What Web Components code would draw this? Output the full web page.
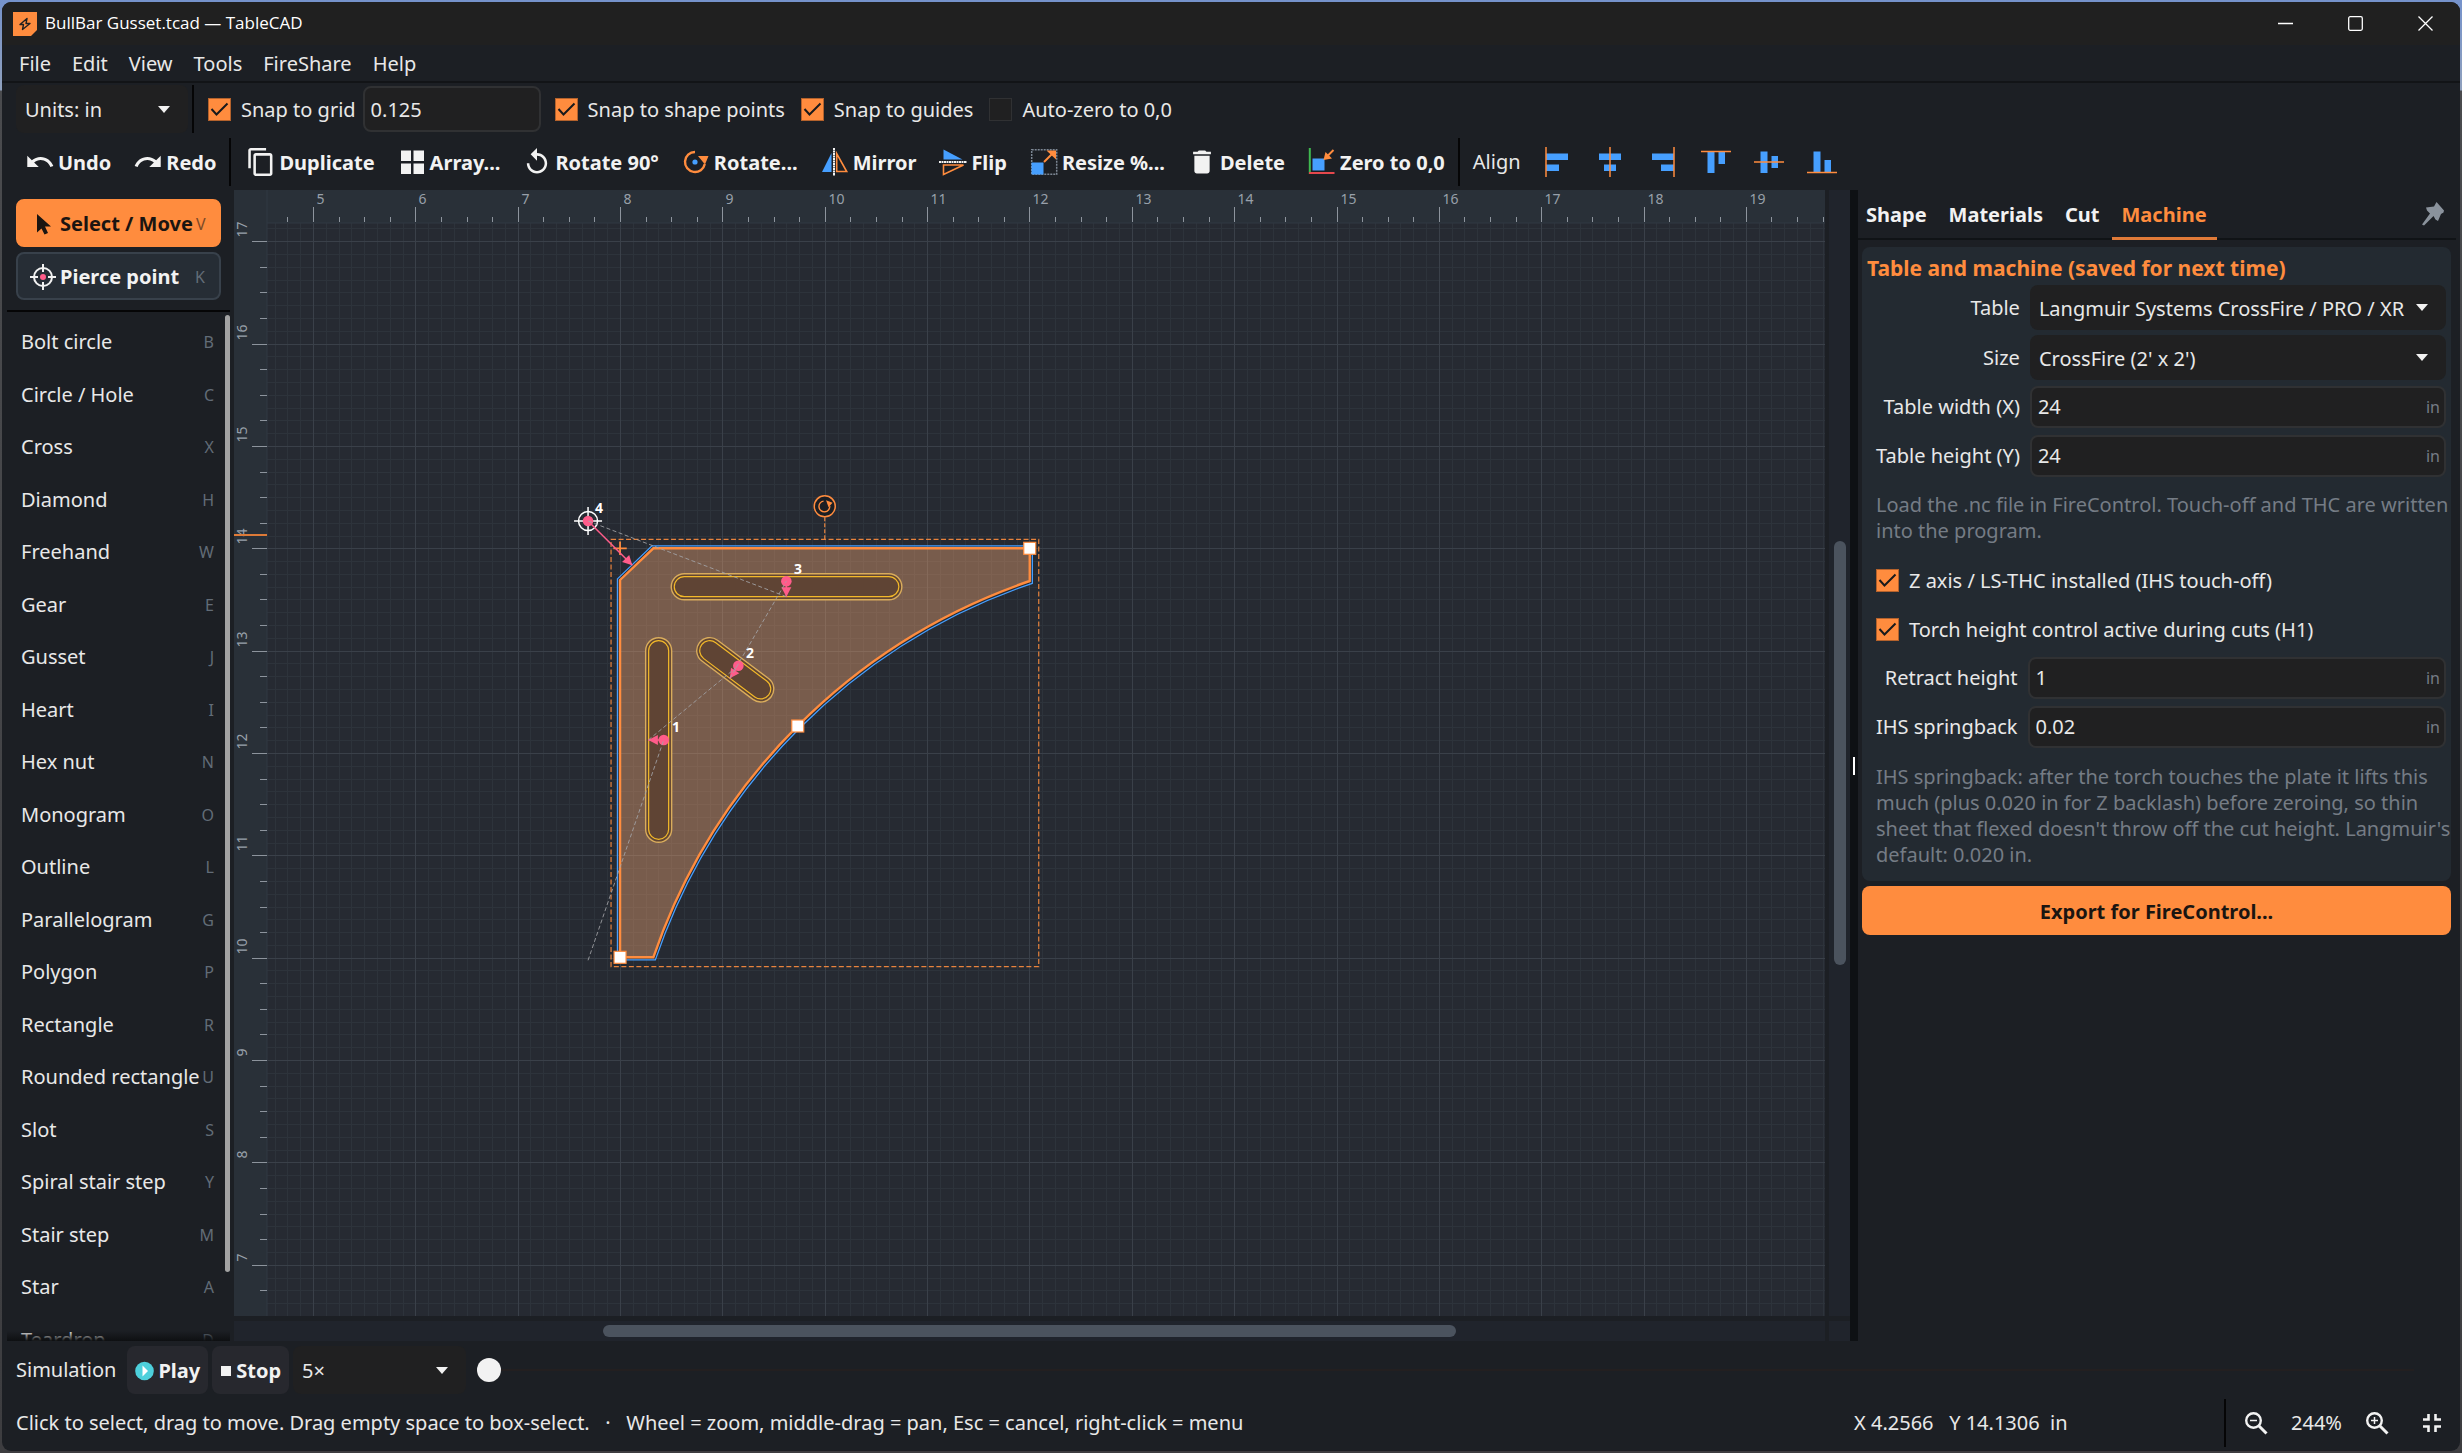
<!DOCTYPE html>
<html lang="en">
<head>
<meta charset="utf-8">
<title>BullBar Gusset.tcad — TableCAD</title>
<style>
  html, body { height: 100%; }
  body {
    margin: 0; padding: 2px; box-sizing: border-box; overflow: hidden;
    background: linear-gradient(#7592cb 0, #8fa0bd 90px, #4a4b4e 91px, #3d3d40 100%);
    font: 20px/26px "Noto Sans", "Open Sans", sans-serif;
    color: #e8e8e8;
    --bg: #1c1f24; --dark: #202021; --line: #303133; --accent: #ff8c3e;
    --dim: #757c85; --key: #626c77; --black: #050506;
  }
</style>
</head>
<body>
<cad-app></cad-app>

<script>
const base = `*{box-sizing:border-box}
button,input,select{font:inherit;color:inherit;margin:0;border:0;background:none;padding:0;outline:0}
svg{display:block;flex:none}`;

const define = (name, html, setup) => customElements.define(name, class extends HTMLElement {
  constructor() {
    super();
    this.attachShadow({ mode: 'open' });
    this.shadowRoot.innerHTML = `<style>${base}</style>` + (typeof html === 'function' ? html(this) : html);
  }
  connectedCallback() { if (setup) setup(this, this.shadowRoot); }
});

const material = d => `<svg width="28" height="28" viewBox="1 1 22 22" overflow="visible" fill="currentColor"><path d="${d}"/></svg>`;
const art = (inner, w = 28) => `<svg width="${w}" height="28" viewBox="0 0 ${w} 28" overflow="visible" fill="none">${inner}</svg>`;
const B = '#469fff', O = '#ff8c3e';
const icons = {
  undo: material('M12.5 8c-2.65 0-5.05.99-6.9 2.6L2 7v9h9l-3.62-3.62c1.39-1.16 3.16-1.88 5.12-1.88 3.54 0 6.55 2.31 7.6 5.5l2.37-.78C21.08 11.03 17.15 8 12.5 8z'),
  redo: material('M18.4 10.6C16.55 8.99 14.15 8 11.5 8c-4.65 0-8.58 3.03-9.96 7.22L3.9 16c1.05-3.19 4.05-5.5 7.6-5.5 1.95 0 3.73.72 5.12 1.88L13 16h9V7l-3.6 3.6z'),
  duplicate: material('M16 1H4c-1.1 0-2 .9-2 2v14h2V3h12V1zm3 4H8c-1.1 0-2 .9-2 2v14c0 1.1.9 2 2 2h11c1.1 0 2-.9 2-2V7c0-1.1-.9-2-2-2zm0 16H8V7h11v14z'),
  array: art('<path fill="#f2f2f2" d="M3 2.500h10v10.500H3zM15.500 2.500h10.500v10.500H15.500zM3 15.500h10v10.500H3zM15.500 15.500h10.500v10.500H15.500z"/>'),
  rotate90: material('M12 5V1L7 6l5 5V7c3.31 0 6 2.69 6 6s-2.69 6-6 6-6-2.69-6-6H4c0 4.42 3.58 8 8 8s8-3.58 8-8-3.58-8-8-8z'),
  rotate: art(`<path d="M13 4A10 10 0 1 0 22.800 16" stroke="${O}" stroke-width="2.400"/><path d="M16 8h10.500l-3.500 8.500z" fill="${O}"/><circle cx="13" cy="14" r="2.600" fill="${B}"/>`),
  mirror: art(`<path d="M10.500 5v19H1z" fill="${B}"/><path d="M13 0v28" stroke="#f2f2f2" stroke-width="2" stroke-dasharray="2 .5"/><path d="M15.700 5.500v18h10z" stroke="${O}" stroke-width="1.600"/>`),
  flip: art(`<path d="M4.500 1.500v10h19z" fill="${B}"/><path d="M0 14h28" stroke="#f2f2f2" stroke-width="2" stroke-dasharray="2 .5"/><path d="M4.500 17h20l-20 9.500z" stroke="${O}" stroke-width="1.600"/>`),
  resize: art(`<path d="M1.700 1.700h25v24.600h-25z" stroke="#7c8794" stroke-width="1.500" stroke-dasharray="2 1"/><path d="M1.500 14.500h12v12h-12z" fill="${B}"/><path d="M14 14l9-9" stroke="${O}" stroke-width="2"/><path d="M16.500 2.500H26v9z" fill="${O}"/>`),
  delete: material('M6 19c0 1.1.9 2 2 2h8c1.1 0 2-.9 2-2V7H6v12zM19 4h-3.5l-1-1h-5l-1 1H5v2h14V4z'),
  zero: art(`<path d="M1.800 0v26" stroke="#3fb950" stroke-width="2"/><path d="M1 25h25.500" stroke="#e5484d" stroke-width="2"/><path d="M4.500 10.500h12v12h-12z" fill="${B}"/><path d="M25.500 2L19 8.500" stroke="${O}" stroke-width="2"/><path d="M15.500 12l2-8 6.500 6.500z" fill="${O}"/>`),
  alignLeft: art(`<path d="M4 5.500h22v6.500H4zM4 16.500h13v6.500H4z" fill="${B}"/><path d="M4 -1v30" stroke="${O}" stroke-width="1.500"/>`, 30),
  alignCenter: art(`<path d="M4 5.500h22v6.500H4zM9 16.500h12v6.500H9z" fill="${B}"/><path d="M15 -1v30" stroke="${O}" stroke-width="1.500"/>`, 30),
  alignRight: art(`<path d="M4 5.500h22v6.500H4zM13 16.500h13v6.500H13z" fill="${B}"/><path d="M26 -1v30" stroke="${O}" stroke-width="1.500"/>`, 30),
  alignTop: art(`<path d="M6.500 3.500h7V25h-7zM17.500 3.500h6.500V16h-6.500z" fill="${B}"/><path d="M0 3.500h30" stroke="${O}" stroke-width="1.500"/>`, 30),
  alignMiddle: art(`<path d="M6.500 3.500h7V25h-7zM17.500 8h6.500v12h-6.500z" fill="${B}"/><path d="M0 14h30" stroke="${O}" stroke-width="1.500"/>`, 30),
  alignBottom: art(`<path d="M6.500 3.500h7V25h-7zM17.500 12h6.500v13h-6.500z" fill="${B}"/><path d="M0 24.500h30" stroke="${O}" stroke-width="1.500"/>`, 30)
};
const chevron = '<svg width="12" height="7" viewBox="0 0 12 7"><path d="M0 0h12L6 7z" fill="#f2f2f2"/></svg>';

/* ---------- small controls ---------- */
define('tool-button', el => `<style>
  :host{display:block}
  button{display:flex;align-items:center;gap:4px;height:48px;padding:0 12px 0 11px;font-weight:700;color:#f2f2f2}
  .text{padding-top:2px}
  :host([compact]) button{padding:0 11px}
</style><button type="button"${el.hasAttribute('label') ? ` aria-label="${el.getAttribute('label')}"` : ''}>${icons[el.getAttribute('icon')]}${el.hasAttribute('compact') ? '' : '<span class="text"><slot></slot></span>'}</button>`);

define('check-option', el => `<style>
  :host{display:block}
  label{display:flex;align-items:center;gap:10px;white-space:nowrap}
  .box{display:grid;width:23px;height:23px}
  .text{padding-top:2px}
  input{appearance:none;grid-area:1/1;width:23px;height:23px;background:var(--dark);border:1px solid var(--line)}
  input:checked{background:var(--accent);border-color:#b4622c}
  svg{grid-area:1/1;visibility:hidden;pointer-events:none}
  input:checked+svg{visibility:visible}
</style><label><span class="box"><input type="checkbox" ${el.hasAttribute('checked') ? 'checked' : ''}>
<svg width="23" height="23" viewBox="0 0 23 23" fill="none"><path d="M3.500 11l5 5.500L19.500 5.500" stroke="#191a1c" stroke-width="2"/></svg></span><span class="text"><slot></slot></span></label>`);

define('drop-down', el => `<style>
  :host{display:block}
  div{display:grid;align-items:center;height:100%}
  select{appearance:none;grid-area:1/1;width:100%;height:100%;padding:2px 36px 0 9px;background:var(--dark);border-radius:8px}
  svg{grid-area:1/1;justify-self:end;margin-right:18px;pointer-events:none}
</style><div><select aria-label="${el.getAttribute('label')}"><option>${el.getAttribute('value')}</option></select>${chevron}</div>`);

define('v-rule', `<style>:host{display:block;width:2px;height:48px;background:var(--black);flex:none}</style>`);

/* ---------- bars ---------- */
define('title-bar', `<style>
  :host{display:flex;align-items:center;height:43px;background:#202020;padding-left:11px;gap:8px;color:#fff}
  h1{flex:1;margin:0;padding-bottom:2px;font:17px/24px "Open Sans","Noto Sans",sans-serif}
  button{width:70px;height:43px;display:grid;place-items:center}
  .ctl{display:flex}
</style>
<svg width="24" height="24" viewBox="0 0 24 24"><path d="M0 0h24v18l-6 6H0z" fill="#ff8c3e"/><path d="M14 6.500L7 12.500h3.500l-1 5L17 11.500h-4z" fill="none" stroke="#202020" stroke-width="1.400" stroke-linejoin="round"/></svg>
<h1>BullBar Gusset.tcad — TableCAD</h1>
<div class="ctl">
<button aria-label="Minimize"><svg width="15" height="15"><path d="M0 7.500h15" stroke="#fff" stroke-width="1.300"/></svg></button>
<button aria-label="Maximize"><svg width="15" height="15"><rect x=".7" y=".7" width="13.600" height="13.600" rx="1.500" fill="none" stroke="#fff" stroke-width="1.300"/></svg></button>
<button aria-label="Close"><svg width="15" height="15"><path d="M.5 .5l14 14M14.500 .5l-14 14" stroke="#fff" stroke-width="1.300"/></svg></button>
</div>`);

define('menu-bar', `<style>
  :host{display:block}
  nav{display:flex;gap:1px;height:38px;align-items:center;padding:2px 7px 0;border-bottom:2px solid #121417}
  button{padding:0 10px}
</style><nav><button>File</button><button>Edit</button><button>View</button><button>Tools</button><button>FireShare</button><button>Help</button></nav>`);

define('options-bar', `<style>
  :host{display:flex;align-items:center;padding:2px 14px 0;height:50px}
  drop-down{width:172px;height:48px}
  v-rule{margin:0 14px 0 4px}
  input[type=text]{width:178px;height:46px;margin:0 14px 0 7px;padding:0 6px;background:var(--dark);border:2px solid var(--line);border-radius:8px}
  .set{display:flex;gap:16px}
</style>
<drop-down label="Units" value="Units: in"></drop-down><v-rule></v-rule>
<check-option checked>Snap to grid</check-option><input type="text" value="0.125" aria-label="Grid step">
<div class="set"><check-option checked>Snap to shape points</check-option><check-option checked>Snap to guides</check-option><check-option>Auto-zero to 0,0</check-option></div>`);

define('tool-bar', `<style>
  :host{display:flex;align-items:center;margin:5px 0 4px;padding:0 13px}
  .group{display:flex}
  .align{display:flex;gap:1px;margin-left:10px}
  v-rule{margin:0 5px 0 1px}
  span{margin-left:8px}
</style>
<div class="group"><tool-button icon="undo">Undo</tool-button><tool-button icon="redo">Redo</tool-button></div><v-rule></v-rule>
<div class="group"><tool-button icon="duplicate">Duplicate</tool-button><tool-button icon="array">Array...</tool-button><tool-button icon="rotate90">Rotate 90°</tool-button><tool-button icon="rotate">Rotate...</tool-button><tool-button icon="mirror">Mirror</tool-button><tool-button icon="flip">Flip</tool-button><tool-button icon="resize">Resize %...</tool-button><tool-button icon="delete">Delete</tool-button><tool-button icon="zero">Zero to 0,0</tool-button></div><v-rule></v-rule>
<span>Align</span>
<div class="align"><tool-button compact icon="alignLeft" label="Align left"></tool-button><tool-button compact icon="alignCenter" label="Align center"></tool-button><tool-button compact icon="alignRight" label="Align right"></tool-button><tool-button compact icon="alignTop" label="Align top"></tool-button><tool-button compact icon="alignMiddle" label="Align middle"></tool-button><tool-button compact icon="alignBottom" label="Align bottom"></tool-button></div>`);

/* ---------- tool palette ---------- */
const shapes = [['Bolt circle','B'],['Circle / Hole','C'],['Cross','X'],['Diamond','H'],['Freehand','W'],['Gear','E'],['Gusset','J'],['Heart','I'],['Hex nut','N'],['Monogram','O'],['Outline','L'],['Parallelogram','G'],['Polygon','P'],['Rectangle','R'],['Rounded rectangle','U'],['Slot','S'],['Spiral stair step','Y'],['Stair step','M'],['Star','A'],['Teardrop','D']];
define('tool-palette', `<style>
  :host{display:flex;flex-direction:column;width:223px;min-height:0}
  .modes{display:flex;flex-direction:column;gap:5px;padding:9px 9px 10px;border-bottom:2px solid var(--black)}
  .modes button{display:flex;align-items:center;height:48px;padding:2px 14px 0 11px;gap:3px;border-radius:8px;border:2px solid #38414b;background:#262d35;font-weight:700;color:#f2f2f2;text-align:left}
  .modes button.on{background:var(--accent);border-color:var(--accent);color:#1b1511}
  .modes span{flex:1;white-space:nowrap}
  kbd{font:16px/26px "Noto Sans",sans-serif;color:var(--key)}
  .on kbd{color:#7d4a27}
  .body{flex:1;min-height:0;display:grid;grid-template-columns:1fr 5px;padding-top:3px;overflow:hidden}
  ul{list-style:none;margin:0;padding:0}
  li button{display:flex;justify-content:space-between;align-items:center;width:100%;height:52px;padding:2px 11px 0 14px;white-space:nowrap}
  li:nth-child(even) button{height:53px}
  .clip{grid-area:1/1;min-height:0;overflow:hidden}
  .thumb{grid-area:1/2;background:#a3a3a3;border-radius:3px;height:93.3%}
  .fade{grid-area:1/1/2/3;align-self:end;height:10px;background:linear-gradient(transparent,#0e1012);z-index:1;pointer-events:none}
</style>
<div class="modes">
<button class="on"><svg width="28" height="28" viewBox="0 0 28 28"><path d="M8 4v18.500l4.500-4 3 6 3.500-1.500-3-6.500h6z" fill="#1b1511"/></svg><span>Select / Move</span><kbd>V</kbd></button>
<button><svg width="28" height="28" viewBox="0 0 28 28" fill="none" stroke="#f2f2f2" stroke-width="2"><circle cx="14" cy="14" r="9"/><path d="M14 1v8M14 19v8M1 14h8M19 14h8"/><circle cx="14" cy="14" r="3" fill="#ff5c8a" stroke="none"/></svg><span>Pierce point</span><kbd>K</kbd></button>
</div>
<div class="body"><div class="clip"><ul>${shapes.map(([n, k]) => `<li><button>${n}<kbd>${k}</kbd></button></li>`).join('')}</ul></div><div class="thumb"></div><div class="fade"></div></div>`);

/* ---------- drawing area ---------- */
const PX = 102.35, RULER = 33;
const X = x => 79 + (x - 5) * PX;
const Y = y => 358.3 + (14 - y) * PX;

// The part, its cut paths and its handles, in canvas pixels relative to (8, 14).
function partSvg() {
  const slot = (cx, cy, len, deg) => `<g transform="translate(${cx} ${cy}) rotate(${deg})">
    <rect x="${-len / 2}" y="-13" width="${len}" height="26" rx="13" fill="#614532" stroke="#d9ac5c" stroke-width="1.400"/>
    <rect x="${-len / 2 + 3}" y="-10" width="${len - 6}" height="20" rx="10" fill="#5f4434" stroke="#f3b929" stroke-width="1.200"/></g>`;
  const lead = (x1, y1, x2, y2) => {
    const a = Math.atan2(y2 - y1, x2 - x1) * 180 / Math.PI;
    return `<path d="M${x1} ${y1}L${x2} ${y2}" stroke="#ff5c8a" stroke-width="1.500"/><path d="M0 0l-9.500 -5v10z" fill="#ff5c8a" transform="translate(${x2} ${y2}) rotate(${a})"/><circle cx="${x1}" cy="${y1}" r="5.300" fill="#ff5c8a"/>`;
  };
  const handle = (x, y) => `<rect x="${x - 6}" y="${y - 6}" width="12" height="12" fill="#fff" stroke="#ff8c3e" stroke-width="1.200"/>`;
  return `<g transform="translate(${X(8)} ${Y(14)})" fill="none">
    <path d="M0 31.700L33.300 0H409.700V32.700A606 606 0 0 0 33.300 409H0Z" fill="rgba(245,167,115,.4)"/>
    <path d="M-2.600 30.600L31.900 -2.400H412.300V35A603.500 603.500 0 0 0 35.300 411.600H-2.600Z" stroke="#469fff" stroke-width="1.300"/>
    <path d="M0 31.700L33.300 0H409.700V32.700A606 606 0 0 0 33.300 409H0Z" stroke="#ff8c3e" stroke-width="2.400"/>
    ${slot(166.500, 38.400, 230.600, 0)}${slot(38.600, 191.700, 204.600, 90)}${slot(115.200, 121.500, 89.800, 36.900)}
    <path d="M-9 -9H418.700V418.400H-9Z" stroke="#e8833d" stroke-width="1.200" stroke-dasharray="5 2.500"/>
    <path d="M204.700 -31V-9" stroke="#e8833d" stroke-width="1.200" stroke-dasharray="4 2"/>
    <circle cx="204.700" cy="-42" r="10.500" fill="#1b1e23" stroke="#ff8c3e" stroke-width="1.500"/>
    <path d="M203.500 -47.200a5.400 5.400 0 1 0 6.200 5" stroke="#ff8c3e" stroke-width="1.400"/><path d="M206 -48l6.500 2.500-4 4.500z" fill="#ff8c3e"/>
    <path d="M-6.700 0H6.700M0 -6.700V6.700" stroke="#ff8c3e" stroke-width="1.800"/>
    <circle cx="-32" cy="-27.300" r="9.500" stroke="#fff" stroke-width="1.500"/>
    <path d="M-46 -27.300h9M-27 -27.300h9M-32 -41.300v9M-32 -22.300v9" stroke="#fff" stroke-width="1.500"/>
    ${lead(-32, -27.300, 12.300, 17)}${lead(166.300, 33, 166.300, 48.400)}${lead(118.300, 117.400, 109.800, 130)}${lead(43.700, 191.700, 28.300, 191.700)}
    <path d="M-32 412L43.700 191.700M28.300 191.700L118.300 117.400M109.800 130L166.300 33M166.300 48.400L-32 -27.300" stroke="#a3a5a8" stroke-opacity=".85" stroke-dasharray="4 2.500"/>
    ${handle(409.700, 0)}${handle(177.700, 177.700)}${handle(0, 409)}
    <g fill="#fff" font-size="14" font-weight="700"><text x="52" y="184">1</text><text x="126" y="110">2</text><text x="174" y="26">3</text><text x="-25" y="-35">4</text></g>
  </g>`;
}

define('cad-canvas', `<style>
  :host{display:block;min-width:0;min-height:0;overflow:hidden;background:#262a32}
  svg{width:100%;height:100%;font-family:"Noto Sans",sans-serif}
</style><svg aria-label="Drawing"></svg>`, (el, root) => {
  const svg = root.querySelector('svg');
  const draw = () => {
    const w = el.clientWidth, h = el.clientHeight;
    let minor = '', major = '', ticks = '', labels = '';
    for (let i = -4; X(5 + i / 8) < w; i++) {
      const x = Math.round(X(5 + i / 8)) + .5;
      if (x <= RULER) continue;
      if (i % 8) minor += `M${x} ${RULER}V${h}`; else major += `M${x} ${RULER}V${h}`;
      if (i % 2 === 0) ticks += `M${x} ${i % 8 ? 27 : 17}V32`;
      if (i % 8 === 0 && x + 20 < w) labels += `<text x="${x + 3}" y="14">${5 + i / 8}</text>`;
    }
    for (let i = 2; Y(17 + i / 8) < h; i--) {
      const y = Math.round(Y(17 + i / 8)) + .5;
      if (y <= RULER) continue;
      if (i % 8) minor += `M${RULER} ${y}H${w}`; else major += `M${RULER} ${y}H${w}`;
      if (i % 2 === 0) ticks += `M${i % 8 ? 26 : 18} ${y}H33`;
      if (i % 8 === 0) labels += `<text transform="translate(13 ${y - 4}) rotate(-90)">${17 + i / 8}</text>`;
    }
    svg.innerHTML = `<path d="${minor}" stroke="#2d333b"/><path d="${major}" stroke="#3a4049"/>${partSvg()}
      <path d="M0 0H${w}V${RULER}H${RULER}V${h}H0Z" fill="#293038"/><path d="M33 0V${h}M33 33H${w}" stroke="#313943"/>
      <path d="${ticks}" stroke="#8d949d"/><g fill="#98a0aa" font-size="14">${labels}</g>
      <path d="M0 345H33" stroke="#dd7a38" stroke-width="2"/>`;
  };
  new ResizeObserver(draw).observe(el);
  draw();
});

define('canvas-frame', `<style>
  :host{display:grid;grid-template:minmax(0,1fr) 20px / minmax(0,1fr) 21px;gap:5px 4px;min-width:0}
  .v,.h,.c{background:#20242c;display:flex}
  .v{flex-direction:column;align-items:center}
  .v::before{content:"";flex:0 0 31.200%}
  .v i{flex:0 0 37.600%;width:12px;background:#4b535e;border-radius:6px}
  .h{align-items:center}
  .h i{flex:0 0 53.600%;height:12px;margin-left:23.200%;background:#4b535e;border-radius:6px}
</style><cad-canvas></cad-canvas><div class="v"><i></i></div><div class="h"><i></i></div><div class="c"></div>`);

define('split-handle', `<style>:host{display:flex;align-items:center;justify-content:center;width:8px;background:#0e1114}i{width:2px;height:18px;background:#fff}</style><i></i>`);

/* ---------- machine panel ---------- */
define('machine-panel', `<style>
  :host{display:block;width:602px}
  .tabs{display:flex;height:50px;margin-right:4px;box-shadow:inset 0 -2px #101316}
  .tablist{display:flex;flex:1;gap:2px}
  .tabs button{height:50px;padding:3px 10px 0;font-weight:700;color:#f2f2f2;border-bottom:3px solid transparent}
  .tabs button:first-child{padding-left:8px}
  .tabs button.on{color:var(--accent);border-color:#e07a38}
  .tabs .pin{padding:0 11px}
  .card{margin:7px 9px 5px 4px;padding:8px 5px 13px 14px;background:#232a31;border-radius:8px}
  h2{margin:0 0 4px -9px;font:700 21px/26px "Noto Sans",sans-serif;color:var(--accent)}
  .form{display:grid;grid-template-columns:max-content 1fr;column-gap:10px;row-gap:5px;align-items:center}
  .form label{text-align:right;line-height:44px;height:44px}
  drop-down{height:45px}
  .field{display:flex;align-items:center;height:42px;background:var(--dark);border:2px solid var(--line);border-radius:8px;padding:0 4px 0 6px}
  .field input{flex:1;min-width:0}
  .field span{font-size:16px;color:var(--dim)}
  p{margin:14px -8px 14px 0;color:var(--dim);line-height:26px}
  p:last-child{margin:15px -8px 0 0}
  check-option{height:44px;margin-bottom:5px;display:grid;align-items:center}
  .export{display:block;width:calc(100% - 13px);margin-left:4px;padding-top:2px;height:49px;border-radius:8px;background:var(--accent);color:#1b1511;font-weight:700}
</style>
<div class="tabs"><div class="tablist" role="tablist"><button role="tab">Shape</button><button role="tab">Materials</button><button role="tab">Cut</button><button role="tab" class="on">Machine</button></div>
<button class="pin" aria-label="Pin panel"><svg width="24" height="24" viewBox="0 0 24 24"><path d="M15.500 0L23 8.500l-.5 2-2.500 1.500-3 7-2.500-1.500-2-3.500L3 23.500l-2-1L9 11.500 6 8.500 5 5.500 13 4.500z" fill="#8a929c"/></svg></button></div>
<div class="card"><h2>Table and machine (saved for next time)</h2>
<div class="form">
<label>Table</label><drop-down label="Table" value="Langmuir Systems CrossFire / PRO / XR"></drop-down>
<label>Size</label><drop-down label="Size" value="CrossFire (2' x 2')"></drop-down>
<label for="tw">Table width (X)</label><div class="field"><input id="tw" type="text" value="24"><span>in</span></div>
<label for="th">Table height (Y)</label><div class="field"><input id="th" type="text" value="24"><span>in</span></div>
</div>
<p>Load the .nc file in FireControl. Touch-off and THC are written into the program.</p>
<check-option checked>Z axis / LS-THC installed (IHS touch-off)</check-option>
<check-option checked>Torch height control active during cuts (H1)</check-option>
<div class="form">
<label for="rh">Retract height</label><div class="field"><input id="rh" type="text" value="1"><span>in</span></div>
<label for="sb">IHS springback</label><div class="field"><input id="sb" type="text" value="0.02"><span>in</span></div>
</div>
<p>IHS springback: after the torch touches the plate it lifts this much (plus 0.020 in for Z backlash) before zeroing, so thin sheet that flexed doesn't throw off the cut height. Langmuir's default: 0.020 in.</p>
</div>
<button class="export">Export for FireControl...</button>`);

/* ---------- bottom bars ---------- */
define('simulation-bar', `<style>
  :host{display:flex;align-items:center;height:48px;margin:5px 0;padding:0 46px 0 14px}
  .name{margin-right:11px}
  button{display:flex;align-items:center;gap:4px;height:48px;padding:2px 8px 0;margin-right:4px;border-radius:8px;background:#27282e;font-weight:700;color:#f2f2f2}
  drop-down{width:173px;height:48px;margin-right:11px}
  input{flex:1;appearance:none;height:24px;min-width:0;background:linear-gradient(#231f20,#231f20) center/100% 2px no-repeat}
  input::-webkit-slider-thumb{appearance:none;width:24px;height:24px;border-radius:50%;background:#f2f2f2}
</style>
<label class="name" for="pos">Simulation</label>
<button><svg width="19" height="20" viewBox="0 0 19 20"><circle cx="9.500" cy="10" r="9.300" fill="#4dd0dc"/><path d="M7.500 4.500L13 10l-5.500 5.500z" fill="#fff"/></svg>Play</button>
<button><svg width="12" height="12" viewBox="0 0 12 12"><path d="M1 1h10v10H1z" fill="#f2f2f2"/></svg>Stop</button>
<drop-down label="Speed" value="5×"></drop-down>
<input id="pos" type="range" min="0" max="100" value="0">`);

const glass = sign => `<svg width="24" height="24" viewBox="0 0 24 24" fill="none" stroke="#f2f2f2"><circle cx="9.500" cy="9.500" r="7.300" stroke-width="2.400"/><path d="M14.500 14.500l8 8" stroke-width="3"/><path d="${sign}" stroke-width="1.500"/></svg>`;
define('status-bar', `<style>
  :host{display:flex;align-items:center;height:48px;margin-bottom:4px;padding:0 8px 0 14px;white-space:pre}
  .hint{flex:1}
  .xy{width:370px}
  button{display:grid;place-items:center;width:40px;height:40px}
  .zoom{display:flex;align-items:center;margin-left:10px;gap:15px}
</style><span class="hint">Click to select, drag to move. Drag empty space to box-select.   ·   Wheel = zoom, middle-drag = pan, Esc = cancel, right-click = menu</span><span class="xy">X 4.2566   Y 14.1306  in</span><v-rule></v-rule><div class="zoom"><button aria-label="Zoom out">${glass('M6 9.500h7')}</button><span>244%</span><button aria-label="Zoom in">${glass('M6 9.500h7M9.500 6v7')}</button><button aria-label="Fit"><svg width="20" height="20" viewBox="0 0 20 20" fill="none" stroke="#f2f2f2" stroke-width="2.600"><path d="M1 6.500h5.500V1M13.500 1v5.500H19M19 13.500h-5.500V19M6.500 19v-5.500H1"/></svg></button></div>`);

define('cad-app', `<style>
  :host{display:flex;flex-direction:column;height:100%;overflow:hidden;border-radius:9px;background:var(--bg)}
  main{flex:1;min-height:0;display:flex;padding-left:5px}
  canvas-frame{flex:1;margin-left:4px}
</style>
<title-bar></title-bar><menu-bar></menu-bar><options-bar></options-bar><tool-bar></tool-bar>
<main><tool-palette></tool-palette><canvas-frame></canvas-frame><split-handle></split-handle><machine-panel></machine-panel></main>
<simulation-bar></simulation-bar><status-bar></status-bar>`);
</script>
</body>
</html>
